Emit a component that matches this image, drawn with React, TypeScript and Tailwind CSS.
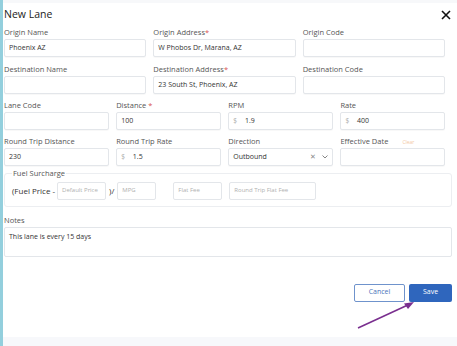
import React from 'react';

const font = { fontFamily: '"Open Sans", "Liberation Sans", sans-serif' };

const Label = ({ text, req, extra }: { text: string; req?: string; extra?: string }) => (
  <div className="h-[12px] flex items-center text-[7.5px] text-[#555] leading-none">
    {text}
    {req && <span className="text-[#d9534f] whitespace-pre">{req}</span>}
    {extra && <span className="ml-[14px] text-[5px] text-[#f3c9a4]">{extra}</span>}
  </div>
);

const Input = ({ value, prefix, children }: { value?: string; prefix?: boolean; children?: React.ReactNode }) => (
  <div className="h-[18px] border border-[#e3e6ea] rounded-[2px] bg-white flex items-center px-[4px] text-[7px] text-[#333] shadow-[0_1px_1px_rgba(0,0,0,0.03)]">
    {prefix && <span className="text-[#aaa] mr-[8px] text-[6.5px]">$</span>}
    <span className="flex-1">{value}</span>
    {children}
  </div>
);

const Field = ({ label, value, req, prefix, extra, children }: { label: string; value?: string; req?: string; prefix?: boolean; extra?: string; children?: React.ReactNode }) => (
  <div className="flex flex-col">
    <Label text={label} req={req} extra={extra} />
    <Input value={value} prefix={prefix}>{children}</Input>
  </div>
);

const Small = ({ ph, w }: { ph: string; w: string }) => (
  <div className={`h-[18px] ${w} border border-[#e3e6ea] rounded-[2px] bg-white flex items-center px-[4px] text-[6px] text-[#b0b0b0]`}>
    {ph}
  </div>
);

export default function App() {
  return (
    <div className="w-[457px] h-[346px] bg-white relative overflow-hidden" style={font}>
      <div className="h-[346px] border-l-[3px] border-[#93cfdd] flex flex-col">
        <div className="h-[3px] bg-[#f7f8fa]" />
        <div className="pl-[1px] pr-[5px] flex flex-col">
          <div className="h-[24px] flex items-center justify-between">
            <span className="text-[10.5px] text-[#222] font-medium">New Lane</span>
            <svg width="10" height="10" viewBox="0 0 10 10" className="mr-[1px]">
              <path d="M1 1L9 9M9 1L1 9" stroke="#111" strokeWidth="1.6" />
            </svg>
          </div>
          <div className="pr-[7px] flex flex-col">
            <div className="grid grid-cols-3 gap-x-[7px]">
              <Field label="Origin Name" value="Phoenix AZ" />
              <Field label="Origin Address" req="*" value="W Phobos Dr, Marana, AZ" />
              <Field label="Origin Code" />
            </div>
            <div className="mt-[7px] grid grid-cols-3 gap-x-[7px]">
              <Field label="Destination Name" />
              <Field label="Destination Address" req="*" value="23 South St, Phoenix, AZ" />
              <Field label="Destination Code" />
            </div>
            <div className="mt-[6px] grid grid-cols-4 gap-x-[7.5px]">
              <Field label="Lane Code" />
              <Field label="Distance" req=" *" value="100" />
              <Field label="RPM" prefix value="1.9" />
              <Field label="Rate" prefix value="400" />
            </div>
            <div className="mt-[6px] grid grid-cols-4 gap-x-[7.5px]">
              <Field label="Round Trip Distance" value="230" />
              <Field label="Round Trip Rate" prefix value="1.5" />
              <Field label="Direction" value="Outbound">
                <span className="text-[#888] text-[7px] mr-[6px]">✕</span>
                <svg width="6" height="4" viewBox="0 0 6 4">
                  <path d="M0.5 0.5L3 3L5.5 0.5" stroke="#777" strokeWidth="0.9" fill="none" />
                </svg>
              </Field>
              <Field label="Effective Date" extra="Clear" />
            </div>
          </div>
          <fieldset className="mt-[4px] border border-[#eceef1] rounded-[3px] pl-[7px] pr-[6px] pb-[6px] pt-0">
            <legend className="px-[1px] text-[7.5px] text-[#555] leading-none">Fuel Surcharge</legend>
            <div className="flex items-center mt-[4px] text-[8px] text-[#333]">
              <span className="mr-[2px]">(Fuel Price -</span>
              <Small ph="Default Price" w="w-[49px]" />
              <span className="mx-[3px]">)/</span>
              <Small ph="MPG" w="w-[39px]" />
              <span className="w-[17px]" />
              <Small ph="Flat Fee" w="w-[49px]" />
              <span className="w-[7px]" />
              <Small ph="Round Trip Flat Fee" w="w-[87px]" />
            </div>
          </fieldset>
          <div className="mt-[9px] h-[10px] flex items-center text-[7.5px] text-[#555]">Notes</div>
          <div className="mt-[1px] h-[30px] border border-[#e3e6ea] rounded-[2px] px-[4px] pt-[5px] text-[7px] text-[#333] leading-none">
            This lane is every 15 days
          </div>
          <div className="mt-[27px] flex justify-end gap-[4px]">
            <button className="w-[51px] h-[18px] border border-[#6f93cc] rounded-[2px] bg-white text-[7px] text-[#4a74bb]">Cancel</button>
            <button className="w-[43px] h-[18px] rounded-[2px] bg-[#2f66bd] text-[7px] text-white">Save</button>
          </div>
        </div>
        <div className="flex-1" />
        <div className="h-[9px] bg-[#f7f8fb]" />
      </div>
      <svg className="absolute left-0 top-0" width="457" height="346" viewBox="0 0 457 346">
        <path d="M358 328L410 304" stroke="#7a2f8f" strokeWidth="1.6" fill="none" />
        <path d="M414 302L404 303.5L408 309Z" fill="#7a2f8f" />
      </svg>
    </div>
  );
}
